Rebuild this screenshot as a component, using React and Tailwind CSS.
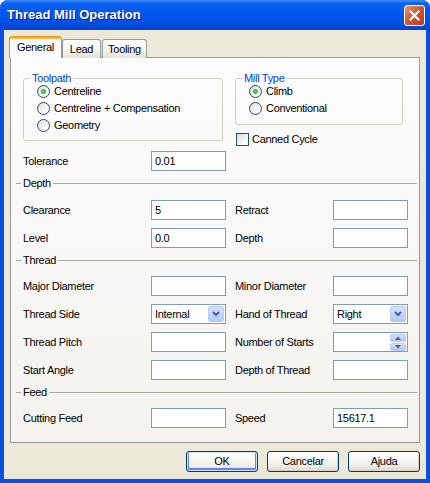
import React from 'react';

const FONT = "font-['Tahoma','Liberation_Sans',sans-serif] text-[11px] tracking-[-0.3px] text-black";

function TextBox({ value = '' }) {
    return (
        <input
            type="text"
            readOnly
            defaultValue={value}
            className="h-[20px] w-[75px] border border-[#7F9DB9] bg-white px-[3px] text-[11px] outline-none"
        />
    );
}

function Chevron() {
    return (
        <svg width="8" height="6" viewBox="0 0 8 6">
            <path d="M1 1 L4 4 L7 1" stroke="#4D6185" strokeWidth="2" fill="none" />
        </svg>
    );
}

function Select({ value }) {
    return (
        <div className="flex h-[20px] w-[75px] items-center justify-between border border-[#7F9DB9] bg-white pl-[3px] pr-[1px]">
            <span>{value}</span>
            <span className="flex h-[16px] w-[16px] items-center justify-center rounded-[2px] border border-[#BACDF6] bg-[linear-gradient(180deg,#D3E0FD,#B3C8F8)]">
                <Chevron />
            </span>
        </div>
    );
}

function Spinner() {
    return (
        <div className="flex h-[20px] w-[75px] items-center justify-end border border-[#7F9DB9] bg-white pr-[1px]">
            <div className="flex w-[16px] flex-col gap-px">
                <span className="flex h-[8px] items-center justify-center rounded-[2px] border border-[#BACDF6] bg-[linear-gradient(180deg,#D3E0FD,#B3C8F8)]">
                    <svg width="6" height="4" viewBox="0 0 6 4"><path d="M0 4 L3 0.5 L6 4 Z" fill="#4D6185" /></svg>
                </span>
                <span className="flex h-[8px] items-center justify-center rounded-[2px] border border-[#BACDF6] bg-[linear-gradient(180deg,#D3E0FD,#B3C8F8)]">
                    <svg width="6" height="4" viewBox="0 0 6 4"><path d="M0 0 L3 3.5 L6 0 Z" fill="#4D6185" /></svg>
                </span>
            </div>
        </div>
    );
}

function Radio({ label, checked }) {
    return (
        <div className="flex h-[17px] items-center gap-[4px]">
            <span className="flex h-[13px] w-[13px] items-center justify-center rounded-full border border-[#1C5180] bg-[linear-gradient(135deg,#DCD9CF,#FFFFFF_75%)]">
                {checked && <span className="h-[5px] w-[5px] rounded-full bg-[radial-gradient(circle,#5BDB55,#21A121)]" />}
            </span>
            <span>{label}</span>
        </div>
    );
}

function Section({ title }) {
    return (
        <div className="flex h-[14px] items-center pl-[5px] pr-[2px]">
            <div className="w-[5px] border-t border-[#ACA899]" />
            <span className="px-[2px]">{title}</span>
            <div className="flex-1 border-t border-[#ACA899]" />
        </div>
    );
}

function Row({ label, control, label2, control2, className = '' }) {
    return (
        <div className={`flex h-[20px] items-center pl-[12px] ${className}`}>
            <span className="w-[128px]">{label}</span>
            {control}
            <span className="ml-[9px] w-[98px]">{label2}</span>
            {control2}
        </div>
    );
}

function Button({ children, primary }) {
    return (
        <button
            className={`h-[21px] w-[72px] rounded-[3px] border border-[#003C74] bg-[linear-gradient(180deg,#FFFFFF,#F0F0EA_70%,#DCD8CB)] ${
                primary ? 'shadow-[inset_0_0_0_1px_#CEE7FF,inset_0_-1px_0_2px_#6982EE]' : 'shadow-[inset_-1px_-1px_0_#D6D0C5]'
            }`}
        >
            {children}
        </button>
    );
}

export default function App() {
    return (
        <div className={`flex h-[483px] w-[430px] flex-col rounded-t-[8px] bg-[#0A50DF] ${FONT}`}>
            {/* title bar */}
            <div className="flex h-[30px] shrink-0 items-center justify-between rounded-t-[8px] bg-[linear-gradient(180deg,#3B8DFB_0%,#0A61F1_12%,#0058EE_40%,#0050E4_75%,#0342CF_100%)] pl-[7px] pr-[5px]">
                <span className="font-['Liberation_Sans',sans-serif] text-[13px] font-bold tracking-normal text-white [text-shadow:1px_1px_#0A1883]">
                    Thread Mill Operation
                </span>
                <button className="flex h-[21px] w-[21px] items-center justify-center rounded-[3px] border border-white bg-[linear-gradient(135deg,#E8987C,#D45A36_45%,#B93A17)]">
                    <svg width="11" height="11" viewBox="0 0 11 11">
                        <path d="M1.5 1.5 L9.5 9.5 M9.5 1.5 L1.5 9.5" stroke="white" strokeWidth="2.2" strokeLinecap="square" />
                    </svg>
                </button>
            </div>

            {/* body */}
            <div className="mx-[4px] mb-[4px] flex flex-1 flex-col bg-[#ECE9D8] px-[6px] pt-[6px]">
                {/* tabs */}
                <div className="relative z-10 -mb-px flex h-[22px] items-end">
                    <div className="-ml-px flex h-[22px] w-[53px] flex-col overflow-hidden rounded-t-[3px] border-x border-[#919B9C] bg-[#FCFCFE]">
                        <div className="h-[3px] bg-[linear-gradient(180deg,#E68B2C,#FFC73C)]" />
                        <div className="flex flex-1 items-center justify-center pb-[2px]">General</div>
                    </div>
                    <div className="flex h-[19px] w-[39px] items-center justify-center rounded-t-[3px] border border-b-0 border-[#919B9C] bg-[linear-gradient(180deg,#FFFFFF,#F3F3EF_60%,#E4E2D8)]">
                        Lead
                    </div>
                    <div className="ml-px flex h-[19px] w-[45px] items-center justify-center rounded-t-[3px] border border-b-0 border-[#919B9C] bg-[linear-gradient(180deg,#FFFFFF,#F3F3EF_60%,#E4E2D8)]">
                        Tooling
                    </div>
                </div>

                {/* panel */}
                <div className="flex h-[386px] flex-col border border-[#919B9C] bg-[linear-gradient(180deg,#FCFCFE,#F4F3EE)]">
                    <div className="mt-[14px] flex items-start pl-[12px]">
                        <fieldset className="w-[200px] rounded-[3px] border border-[#D0D0BF] pb-[6px] pl-[13px]">
                            <legend className="-ml-[7px] px-[2px] leading-[13px] text-[#0046D5]">Toolpath</legend>
                            <div className="-mt-[2px]">
                                <Radio label="Centreline" checked />
                                <Radio label="Centreline + Compensation" />
                                <Radio label="Geometry" />
                            </div>
                        </fieldset>
                        <div className="ml-[12px] flex flex-col">
                            <fieldset className="w-[168px] rounded-[3px] border border-[#D0D0BF] pb-[7px] pl-[13px]">
                                <legend className="-ml-[7px] px-[2px] leading-[13px] text-[#0046D5]">Mill Type</legend>
                                <div className="-mt-[2px]">
                                    <Radio label="Climb" checked />
                                    <Radio label="Conventional" />
                                </div>
                            </fieldset>
                            <div className="mt-[8px] flex h-[13px] items-center gap-[3px] pl-px">
                                <span className="h-[13px] w-[13px] border border-[#1C5180] bg-[linear-gradient(135deg,#DCD9CF,#FFFFFF_75%)]" />
                                <span>Canned Cycle</span>
                            </div>
                        </div>
                    </div>

                    <Row className="mt-[5px]" label="Tolerance" control={<TextBox value="0.01" />} />

                    <div className="mt-[5px]"><Section title="Depth" /></div>
                    <Row className="mt-[10px]" label="Clearance" control={<TextBox value="5" />} label2="Retract" control2={<TextBox />} />
                    <Row className="mt-[8px]" label="Level" control={<TextBox value="0.0" />} label2="Depth" control2={<TextBox />} />

                    <div className="mt-[5px]"><Section title="Thread" /></div>
                    <Row className="mt-[9px]" label="Major Diameter" control={<TextBox />} label2="Minor Diameter" control2={<TextBox />} />
                    <Row className="mt-[8px]" label="Thread Side" control={<Select value="Internal" />} label2="Hand of Thread" control2={<Select value="Right" />} />
                    <Row className="mt-[8px]" label="Thread Pitch" control={<TextBox />} label2="Number of Starts" control2={<Spinner />} />
                    <Row className="mt-[8px]" label="Start Angle" control={<TextBox />} label2="Depth of Thread" control2={<TextBox />} />

                    <div className="mt-[5px]"><Section title="Feed" /></div>
                    <Row className="mt-[9px]" label="Cutting Feed" control={<TextBox />} label2="Speed" control2={<TextBox value="15617.1" />} />
                </div>

                {/* buttons */}
                <div className="mt-[8px] flex justify-end gap-[9px]">
                    <Button primary>OK</Button>
                    <Button>Cancelar</Button>
                    <Button>Ajuda</Button>
                </div>
            </div>
        </div>
    );
}
